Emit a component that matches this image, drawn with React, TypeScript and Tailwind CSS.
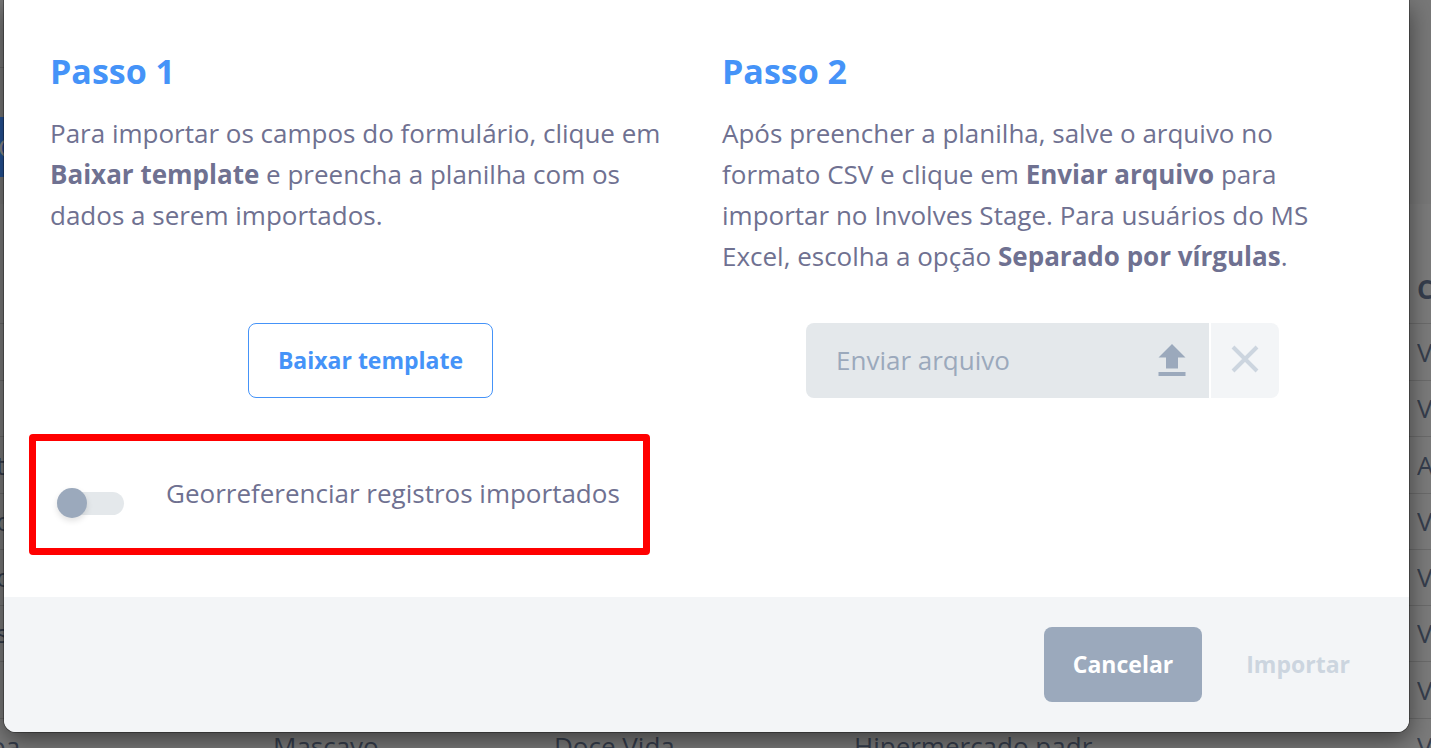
import { useState } from "react";

interface Row {
    first: string;
    product?: string;
    brand?: string;
    store?: string;
    last: string;
}

const rows: Row[] = [
    { first: "", last: "V" },
    { first: "", last: "V" },
    { first: "t", last: "A" },
    { first: "o", last: "V" },
    { first: "o", last: "V" },
    { first: "s", last: "V" },
    { first: "", last: "V" },
    {
        first: "oa",
        product: "Mascavo",
        brand: "Doce Vida",
        store: "Hipermercado padr",
        last: "V",
    },
];

const Backdrop: React.FC = () => {
    return (
        <div className="h-full overflow-hidden bg-[#7b7b7b] text-[#363e4d]">
            <div className="h-[204px] bg-[#787878]">
                <div className="h-[68px] w-1/2 border-b border-[#686868]" />
                <div className="pt-[49px]">
                    <div className="flex h-[60px] w-4 items-center bg-[#27559a] text-[26px] text-[#8c8c8c]">
                        <span className="-ml-0.5">C</span>
                    </div>
                </div>
            </div>
            <table className="w-full table-fixed border-collapse text-left text-[26px]">
                <colgroup>
                    <col className="w-[273px]" />
                    <col className="w-[281px]" />
                    <col className="w-[300px]" />
                    <col />
                    <col className="w-[14px]" />
                </colgroup>
                <thead>
                    <tr className="h-[119px] border-b border-[#6b6b6b]">
                        <th colSpan={4} />
                        <th className="overflow-hidden pt-[52px] font-bold">C</th>
                    </tr>
                </thead>
                <tbody>
                    {rows.map((row, index) => (
                        <tr
                            key={`row-${index}`}
                            className="h-14 border-b border-[#6b6b6b] leading-8 whitespace-nowrap first:h-[57px] nth-[4n+3]:h-[57px]"
                        >
                            <td>
                                <span className={row.product ? "-ml-2.5" : "-ml-1"}>
                                    {row.first}
                                </span>
                            </td>
                            <td>{row.product}</td>
                            <td>{row.brand}</td>
                            <td>{row.store}</td>
                            <td className="overflow-hidden">{row.last}</td>
                        </tr>
                    ))}
                </tbody>
            </table>
        </div>
    );
};

interface StepProps {
    title: string;
    children?: React.ReactNode;
}

const Step: React.FC<StepProps> = ({ title, children }) => {
    return (
        <section>
            <h2 className="text-[34px] leading-[48px] font-bold text-[#4593f8]">
                {title}
            </h2>
            <p className="mt-[18px] text-[26px] leading-[41px]">{children}</p>
        </section>
    );
};

const UploadIcon = () => (
    <svg
        className="mb-0.5"
        width="28"
        height="32"
        viewBox="0 0 28 32"
        fill="currentColor"
    >
        <path d="M14 0 27.5 13.5H20V24.5H8V13.5H.5z" />
        <path d="M.5 28h27v4H.5z" />
    </svg>
);

const CloseIcon = () => (
    <svg
        width="28"
        height="28"
        viewBox="0 0 28 28"
        fill="none"
        stroke="currentColor"
        strokeWidth="4"
    >
        <path d="M2 2 26 26M26 2 2 26" />
    </svg>
);

export default function App() {
    const [georef, setGeoref] = useState<boolean>(false);

    return (
        <div className="relative h-screen overflow-hidden font-['Open_Sans',sans-serif]">
            <Backdrop />
            <div
                role="dialog"
                aria-label="Importar"
                className="absolute top-0 right-[22px] left-1 rounded-b-xl bg-white text-[#6f7191] shadow-[0_0_0_1px_rgba(0,0,0,0.3),0_8px_24px_rgba(0,0,0,0.5)]"
            >
                <div className="grid grid-cols-2 gap-x-[31px] px-[46px] pt-[47px] pb-[42px]">
                    <Step title="Passo 1">
                        Para importar os campos do formulário, clique em{" "}
                        <b>Baixar template</b> e preencha a planilha com os dados a
                        serem importados.
                    </Step>
                    <Step title="Passo 2">
                        Após preencher a planilha, salve o arquivo no formato CSV e
                        clique em <b>Enviar arquivo</b> para importar no Involves
                        Stage. Para usuários do MS Excel, escolha a opção{" "}
                        <b>Separado por vírgulas</b>.
                    </Step>

                    <div className="mt-[46px] flex justify-center">
                        <button className="h-[75px] rounded-lg border border-[#4593f8] px-[29px] text-[23px] font-bold text-[#4593f8]">
                            Baixar template
                        </button>
                    </div>
                    <div className="mt-[46px] flex justify-center gap-[2px]">
                        <button className="flex h-[75px] w-[403px] items-center justify-between rounded-l-lg bg-[#e4e8eb] pr-[23px] pl-[30px] text-[26px] text-[#9ba9bc]">
                            Enviar arquivo
                            <UploadIcon />
                        </button>
                        <button
                            disabled
                            aria-label="Remover"
                            className="flex h-[75px] w-[68px] items-center justify-center rounded-r-lg bg-[#f3f5f7] pb-1 text-[#ccd5df]"
                        >
                            <CloseIcon />
                        </button>
                    </div>

                    <label className="mt-9 -ml-[21px] flex h-[121px] w-fit gap-[42px] rounded border-[7px] border-[#ff0000] pt-8 pr-[23px] pl-[21px] text-[26px] leading-[41px] whitespace-nowrap">
                        <input
                            type="checkbox"
                            role="switch"
                            checked={georef}
                            onChange={(e) => setGeoref(e.target.checked)}
                            className="mt-[19px] h-[23px] w-[67px] shrink-0 appearance-none rounded-full bg-[#e4e8eb] before:-mt-1 before:block before:size-[30px] before:rounded-full before:bg-[#9ba9bc] before:shadow-[0_3px_6px_rgba(0,0,0,0.12)] checked:before:ml-[37px]"
                        />
                        Georreferenciar registros importados
                    </label>
                </div>

                <div className="flex justify-end gap-[15px] rounded-b-xl bg-[#f3f5f7] p-[30px] text-[23px] font-bold">
                    <button className="h-[75px] rounded-lg bg-[#9ba9bc] px-[29px] text-white">
                        Cancelar
                    </button>
                    <button disabled className="h-[75px] px-[29px] text-[#ccd5df]">
                        Importar
                    </button>
                </div>
            </div>
        </div>
    );
}
